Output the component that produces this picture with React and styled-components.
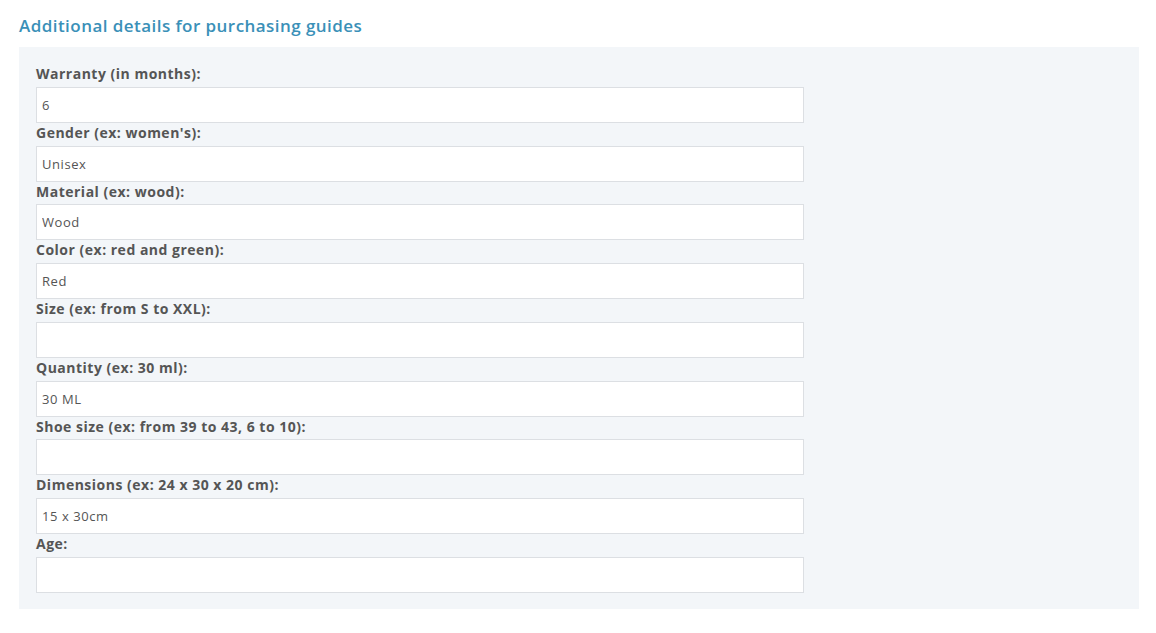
import React from "react";
import styled, { createGlobalStyle } from "styled-components";

const Global = createGlobalStyle`
  html, body { margin: 0; padding: 0; background: #ffffff; }
  body { font-family: "Open Sans", "Liberation Sans", sans-serif; }
  * { box-sizing: border-box; }
`;

const Page = styled.div`
  padding: 14px 17px 0 19px;
  width: 1156px;
`;

const Title = styled.h2`
  margin: 0;
  height: 33px;
  font-size: 17px;
  font-weight: 600;
  line-height: 24px;
  color: #3a90b8;
  letter-spacing: 0.45px;
`;

const Panel = styled.div`
  background: #f3f6f9;
  padding: 17px 17px 16px 17px;
  width: 1120px;
`;

const Field = styled.div`
  display: flex;
  flex-direction: column;
  width: 768px;
`;

const Label = styled.label`
  display: block;
  height: 22.75px;
  line-height: 20px;
  font-size: 14px;
  font-weight: 700;
  color: #555555;
  letter-spacing: 0.5px;
`;

const Input = styled.input`
  display: block;
  width: 768px;
  height: 36px;
  margin: 0;
  padding: 0 5px;
  border: 1px solid #dcdfe3;
  background: #ffffff;
  font-family: "Open Sans", "Liberation Sans", sans-serif;
  font-size: 13px;
  letter-spacing: 0.55px;
  color: #555555;
  outline: none;
`;

const fields = [
  ["Warranty (in months):", "6"],
  ["Gender (ex: women's):", "Unisex"],
  ["Material (ex: wood):", "Wood"],
  ["Color (ex: red and green):", "Red"],
  ["Size (ex: from S to XXL):", ""],
  ["Quantity (ex: 30 ml):", "30 ML"],
  ["Shoe size (ex: from 39 to 43, 6 to 10):", ""],
  ["Dimensions (ex: 24 x 30 x 20 cm):", "15 x 30cm"],
  ["Age:", ""],
];

export default function App() {
  return (
    <Page>
      <Global />
      <Title>Additional details for purchasing guides</Title>
      <Panel>
        {fields.map(([label, value]) => (
          <Field key={label}>
            <Label>{label}</Label>
            <Input defaultValue={value} />
          </Field>
        ))}
      </Panel>
    </Page>
  );
}
